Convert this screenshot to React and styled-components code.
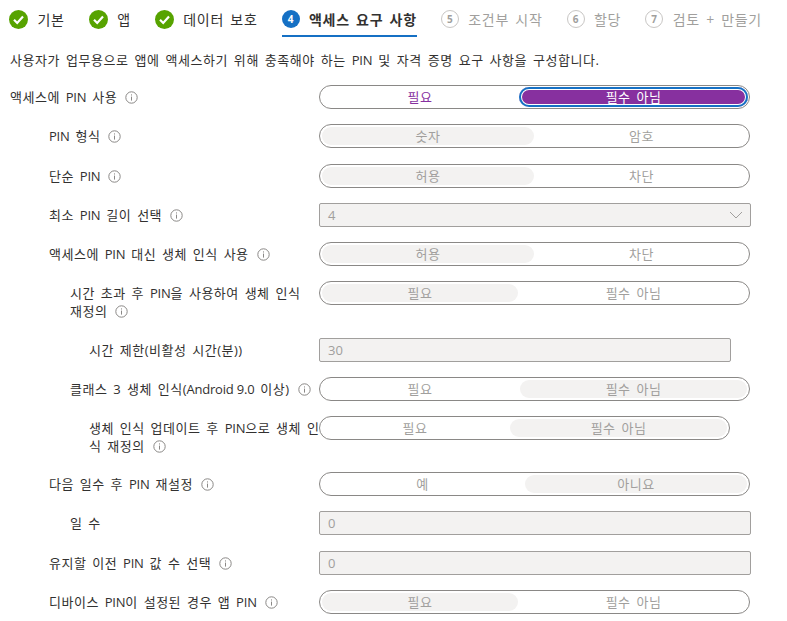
import React from "react";
import styled, { createGlobalStyle } from "styled-components";

const GlobalStyle = createGlobalStyle`
  html, body {
    margin: 0;
    padding: 0;
    background: #fff;
    overflow: hidden;
  }
  body {
    font-family: "Open Sans", "Noto Sans CJK KR", sans-serif;
    font-size: 13px;
    letter-spacing: 0.5px;
    word-spacing: 2px;
    color: #323130;
  }
`;

const Page = styled.div`
  width: 787px;
  height: 621px;
  overflow: hidden;
`;

const Latin = styled.span`
  letter-spacing: -0.2px;
  word-spacing: 0;
`;

const Tabs = styled.div`
  display: flex;
  height: 37px;
  padding-left: 9px;
  gap: 24px;
`;

const Tab = styled.div`
  display: flex;
  align-items: center;
  gap: 9.5px;
  height: 37px;
  padding: 3px 0 0;
  box-sizing: border-box;
  font-size: 14px;
  letter-spacing: 0.7px;
  white-space: nowrap;
  font-weight: ${(p) => (p.$active ? 700 : 400)};
  color: ${(p) => (p.$muted ? "#a19f9d" : "#323130")};
  border-bottom: 2px solid ${(p) => (p.$active ? "#1570c4" : "transparent")};
`;

const StepBadge = styled.span`
  width: 18px;
  height: 18px;
  box-sizing: border-box;
  border-radius: 50%;
  display: flex;
  align-items: center;
  justify-content: center;
  letter-spacing: 0;
  font-size: 10px;
  font-weight: 700;
  color: ${(p) => (p.$active ? "#fff" : "#a19f9d")};
  background: ${(p) => (p.$active ? "#1570c4" : "transparent")};
  border: ${(p) => (p.$active ? "none" : "1px solid #c8c6c4")};
`;

const Description = styled.p`
  margin: 14px 0 0 10px;
  height: 18px;
  line-height: 18px;
  font-size: 13px;
  letter-spacing: 0.55px;
  white-space: nowrap;
`;

const Form = styled.div`
  display: flex;
  flex-direction: column;
  margin-top: 16px;
`;

const Row = styled.div`
  display: flex;
  align-items: flex-start;
  padding-left: 10px;
  min-height: 24px;
  margin-bottom: ${(p) => p.$after ?? 15}px;
`;

const Label = styled.div`
  width: ${(p) => 309 - (p.$indent ?? 0)}px;
  margin-left: ${(p) => p.$indent ?? 0}px;
  flex: none;
  line-height: 18px;
  padding-top: 3px;
  font-size: 13px;
  white-space: nowrap;
  color: #323130;
`;

const InfoWrap = styled.svg`
  width: 13px;
  height: 13px;
  margin-left: 8px;
  vertical-align: -2px;
`;

const Toggle = styled.div`
  width: ${(p) => p.$width ?? 431}px;
  height: 24px;
  flex: none;
  box-sizing: border-box;
  border: 1px solid #8a8886;
  border-radius: 12px;
  padding: 2px;
  display: grid;
  grid-template-columns: ${(p) => p.$left}px 1fr;
  column-gap: 2px;
  background: #fff;
`;

const Segment = styled.div`
  display: flex;
  align-items: center;
  justify-content: center;
  border-radius: 9px;
  font-size: 13px;
  line-height: 18px;
  color: ${(p) => (p.$purple ? "#87309f" : "#a19f9d")};
  background: ${(p) => (p.$on ? "#f3f2f1" : "transparent")};
`;

const FocusSegment = styled.div`
  display: flex;
  align-items: center;
  justify-content: center;
  margin: -1px -1px -1px -1px;
  border-radius: 10px;
  font-size: 13px;
  line-height: 18px;
  color: #fff;
  background: #87309f;
  box-shadow: inset 0 0 0 2px #1570c4, inset 0 0 0 3px #fff;
`;

const Field = styled.div`
  width: ${(p) => p.$width ?? 432}px;
  height: 24px;
  flex: none;
  box-sizing: border-box;
  display: flex;
  align-items: center;
  justify-content: space-between;
  padding: 0 7px 0 8px;
  background: #f3f2f1;
  border: 1px solid #a19f9d;
  border-radius: 2px;
  font-size: 13px;
  letter-spacing: 0;
  color: #a19f9d;
`;

const Info = () => (
  <InfoWrap viewBox="0 0 13 13" fill="none">
    <circle cx="6.5" cy="6.5" r="5.7" stroke="#8a8886" />
    <path d="M6.5 5.6V9.6" stroke="#8a8886" />
    <path d="M6.5 3.4V4.5" stroke="#8a8886" />
  </InfoWrap>
);

const Check = () => (
  <svg width="19" height="19" viewBox="0 0 19 19">
    <circle cx="9.5" cy="9.5" r="9.5" fill="#57a300" />
    <path d="M5 9.8L8.2 13L14 6.6" fill="none" stroke="#fff" strokeWidth="2.2" />
  </svg>
);

const Chevron = () => (
  <svg width="14" height="8" viewBox="0 0 14 8" fill="none">
    <path d="M1 1L7 7L13 1" stroke="#a19f9d" />
  </svg>
);

const PinToggle = ({ left, right, on, leftWidth, width }) => (
  <Toggle $left={leftWidth} $width={width}>
    <Segment $on={on === "left"}>{left}</Segment>
    <Segment $on={on === "right"}>{right}</Segment>
  </Toggle>
);

export default function App() {
  return (
    <Page>
      <GlobalStyle />
      <Tabs>
        <Tab><Check />기본</Tab>
        <Tab><Check />앱</Tab>
        <Tab><Check />데이터 보호</Tab>
        <Tab $active><StepBadge $active>4</StepBadge>액세스 요구 사항</Tab>
        <Tab $muted><StepBadge>5</StepBadge>조건부 시작</Tab>
        <Tab $muted><StepBadge>6</StepBadge>할당</Tab>
        <Tab $muted><StepBadge>7</StepBadge>검토 + 만들기</Tab>
      </Tabs>
      <Description>
        사용자가 업무용으로 앱에 액세스하기 위해 충족해야 하는 <Latin>PIN</Latin> 및 자격 증명 요구 사항을 구성합니다.
      </Description>
      <Form>
        <Row>
          <Label>액세스에 <Latin>PIN</Latin> 사용<Info /></Label>
          <Toggle $left={196}>
            <Segment $purple>필요</Segment>
            <FocusSegment>필수 아님</FocusSegment>
          </Toggle>
        </Row>
        <Row $after={16}>
          <Label $indent={39}><Latin>PIN</Latin> 형식<Info /></Label>
          <PinToggle left="숫자" right="암호" on="left" leftWidth={212} />
        </Row>
        <Row>
          <Label $indent={39}>단순 <Latin>PIN</Latin><Info /></Label>
          <PinToggle left="허용" right="차단" on="left" leftWidth={212} />
        </Row>
        <Row>
          <Label $indent={39}>최소 <Latin>PIN</Latin> 길이 선택<Info /></Label>
          <Field>4<Chevron /></Field>
        </Row>
        <Row>
          <Label $indent={39}>액세스에 <Latin>PIN</Latin> 대신 생체 인식 사용<Info /></Label>
          <PinToggle left="허용" right="차단" on="left" leftWidth={212} />
        </Row>
        <Row $after={18}>
          <Label $indent={60}>시간 초과 후 <Latin>PIN</Latin>을 사용하여 생체 인식<br />재정의<Info /></Label>
          <PinToggle left="필요" right="필수 아님" on="left" leftWidth={196} />
        </Row>
        <Row>
          <Label $indent={79}>시간 제한(비활성 시간(분))</Label>
          <Field $width={412}>30</Field>
        </Row>
        <Row>
          <Label $indent={60}>클래스 3 생체 인식<Latin>(Android 9.0</Latin> 이상)<Info /></Label>
          <PinToggle left="필요" right="필수 아님" on="right" leftWidth={196} />
        </Row>
        <Row $after={17}>
          <Label $indent={79}>생체 인식 업데이트 후 <Latin>PIN</Latin>으로 생체 인<br />식 재정의<Info /></Label>
          <PinToggle left="필요" right="필수 아님" on="right" leftWidth={186} width={411} />
        </Row>
        <Row>
          <Label $indent={39}>다음 일수 후 <Latin>PIN</Latin> 재설정<Info /></Label>
          <PinToggle left="예" right="아니요" on="right" leftWidth={201} />
        </Row>
        <Row $after={16}>
          <Label $indent={60}>일 수</Label>
          <Field>0</Field>
        </Row>
        <Row>
          <Label $indent={39}>유지할 이전 <Latin>PIN</Latin> 값 수 선택<Info /></Label>
          <Field>0</Field>
        </Row>
        <Row>
          <Label $indent={39}>디바이스 <Latin>PIN</Latin>이 설정된 경우 앱 <Latin>PIN</Latin><Info /></Label>
          <PinToggle left="필요" right="필수 아님" on="left" leftWidth={196} />
        </Row>
      </Form>
    </Page>
  );
}
